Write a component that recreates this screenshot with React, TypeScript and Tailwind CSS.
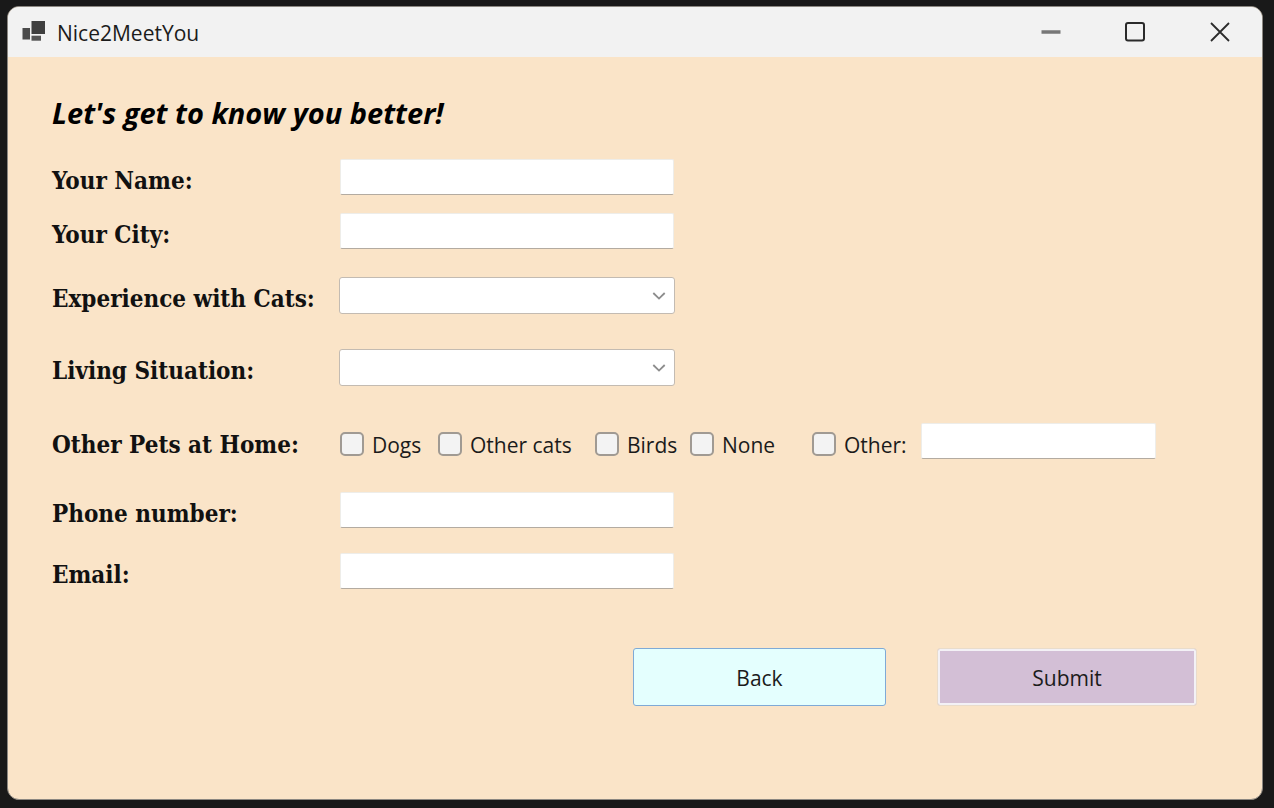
import type { ReactNode } from "react";

const boxClass =
  "block h-9 rounded-[2px] border border-x-[#eeede9] border-t-[#eeede9] border-b-[#b3aba1] bg-white px-2 text-[20px] outline-none";

const captionClass =
  "w-72 shrink-0 pt-2 font-['DejaVu_Serif_Condensed','DejaVu_Serif',serif] text-[24px] leading-7 font-bold whitespace-nowrap text-[#111]";

function Row({ id, label, gap, children }: { id: string; label: string; gap: string; children: ReactNode }) {
  return (
    <div className={`flex min-h-9 items-start ${gap}`}>
      <label htmlFor={id} className={captionClass}>
        {label}
      </label>
      {children}
    </div>
  );
}

function TextBox({ id, type = "text" }: { id: string; type?: string }) {
  return <input id={id} type={type} className={`${boxClass} w-full max-w-[334px]`} />;
}

function ComboBox({ id, options }: { id: string; options: string[] }) {
  return (
    <div className="relative -ml-px w-full max-w-[336px]">
      <select
        id={id}
        defaultValue=""
        className="block h-[37px] w-full appearance-none rounded-[3px] border border-[#c3bbb2] bg-white px-2 text-[20px] outline-none"
      >
        <option value="" hidden aria-label="Not selected" />
        {options.map((option) => (
          <option key={option}>{option}</option>
        ))}
      </select>
      <svg
        viewBox="0 0 14 8"
        className="pointer-events-none absolute top-[15px] right-[9px] h-2 w-3.5"
        fill="none"
        stroke="#8c8c8c"
        strokeWidth="1.8"
        aria-hidden="true"
      >
        <path d="M1.3 1l5.7 5.6L12.7 1" />
      </svg>
    </div>
  );
}

const pets = [
  { name: "Dogs", width: "w-[98px]" },
  { name: "Other cats", width: "w-[157px]" },
  { name: "Birds", width: "w-[95px]" },
  { name: "None", width: "w-[122px]" },
  { name: "Other:", width: "w-[109px]" },
];

export default function App() {
  return (
    <div className="flex min-h-screen flex-col bg-[#191919] pt-1.5 pr-[11px] pb-2 pl-[7px] font-['Open_Sans',sans-serif] text-[#1b1b1b]">
      <main className="flex grow flex-col overflow-hidden rounded-xl border border-[#8b8781] bg-[#fae4c8]">
        <header className="flex h-[50px] shrink-0 items-center bg-[#f2f2f2] pl-3.5">
          <svg viewBox="0 0 24 22" className="h-[22px] w-6" aria-hidden="true">
            <rect x="9.5" y="0" width="13.5" height="13" fill="#3f3f3f" />
            <rect x="0.5" y="7" width="7.5" height="11.5" fill="#4b4b4b" />
            <rect x="9.5" y="14.7" width="9.5" height="5" fill="#555" />
          </svg>
          <h1 className="ml-[11px] grow pt-0.5 text-[21px] leading-7">Nice2MeetYou</h1>
          <div className="flex pb-px">
            <button type="button" aria-label="Minimize" className="flex h-12 w-[85px] items-center justify-center">
              <svg viewBox="0 0 22 22" className="size-[22px]" aria-hidden="true">
                <path d="M1.5 11h19" stroke="#777" strokeWidth="3.4" />
              </svg>
            </button>
            <button type="button" aria-label="Maximize" className="flex h-12 w-[84px] items-center justify-center">
              <svg viewBox="0 0 22 22" className="size-[22px]" aria-hidden="true">
                <rect x="2" y="2" width="18" height="17.5" rx="2" fill="none" stroke="#2b2b2b" strokeWidth="2" />
              </svg>
            </button>
            <button type="button" aria-label="Close" className="flex h-12 w-[85px] items-center justify-center">
              <svg viewBox="0 0 22 22" className="size-[22px]" aria-hidden="true">
                <path d="M2 2l18 18M20 2L2 20" stroke="#2b2b2b" strokeWidth="1.8" />
              </svg>
            </button>
          </div>
        </header>

        <form className="pt-9 pr-[65px] pb-10 pl-11" onSubmit={(event) => event.preventDefault()}>
          <h2 className="text-[29px] leading-10 font-bold text-black italic">Let's get to know you better!</h2>

          <Row id="name" label="Your Name:" gap="mt-[26px]">
            <TextBox id="name" />
          </Row>
          <Row id="city" label="Your City:" gap="mt-[18px]">
            <TextBox id="city" />
          </Row>
          <Row id="experience" label="Experience with Cats:" gap="mt-7">
            <ComboBox id="experience" options={["None", "Some", "Plenty"]} />
          </Row>
          <Row id="living" label="Living Situation:" gap="mt-[35px]">
            <ComboBox id="living" options={["House", "Apartment"]} />
          </Row>

          <div role="group" aria-labelledby="pets" className="mt-[37px] flex min-h-9 items-start">
            <span id="pets" className={captionClass}>
              Other Pets at Home:
            </span>
            <div className="flex">
              {pets.map(({ name, width }) => (
                <label key={name} className={`flex h-[42px] items-center gap-2 whitespace-nowrap text-[21px] leading-7 ${width}`}>
                  <input
                    type="checkbox"
                    className="size-6 shrink-0 appearance-none rounded-[5px] border-2 border-[#a09a93] bg-[#f3f3f3] checked:bg-[#0067c0]"
                  />
                  <span className="pt-0.5">{name}</span>
                </label>
              ))}
              <input type="text" aria-label="Other pets" className={`${boxClass} w-[235px]`} />
            </div>
          </div>

          <Row id="phone" label="Phone number:" gap="mt-[27px]">
            <TextBox id="phone" type="tel" />
          </Row>
          <Row id="email" label="Email:" gap="mt-[25px]">
            <TextBox id="email" type="email" />
          </Row>

          <div className="mt-[59px] flex justify-end gap-[51px]">
            <button
              type="button"
              className="h-[58px] w-[253px] rounded-[3px] border border-[#7faad6] bg-[#e4fffe] pt-0.5 text-[21px] leading-7"
            >
              Back
            </button>
            <button
              type="submit"
              className="h-[58px] w-[260px] rounded-[3px] border border-[#e9dccb] bg-[#d3bfd6] pt-0.5 text-[21px] leading-7 inset-ring-2 inset-ring-[#f3f1f6]"
            >
              Submit
            </button>
          </div>
        </form>
      </main>
    </div>
  );
}
